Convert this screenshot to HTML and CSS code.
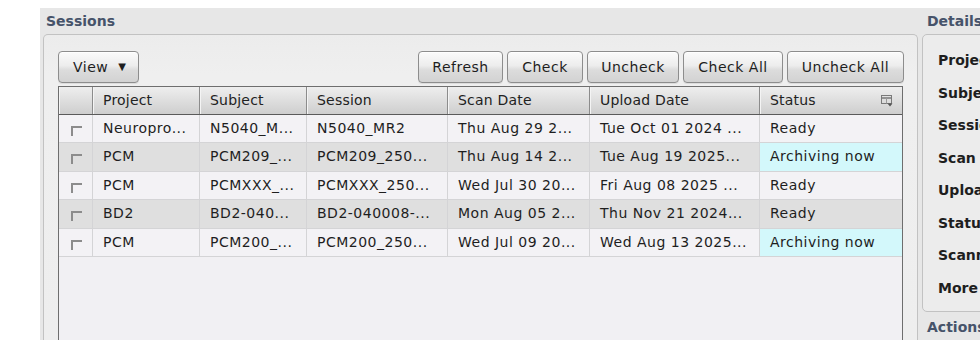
FILE: index.html
```html
<!DOCTYPE html>
<html>
<head>
<meta charset="utf-8">
<title>Sessions</title>
<link rel="stylesheet" href="styles.css">
</head>
<body>
<div class="app">
  <section class="sessions">
    <div class="section-title">Sessions</div>
    <div class="panel sessions-panel">
      <div class="toolbar">
        <button class="btn btn-view">View <span class="caret">&#9660;</span></button>
        <div class="toolbar-right">
          <button class="btn w-refresh">Refresh</button>
          <button class="btn w-check">Check</button>
          <button class="btn w-uncheck">Uncheck</button>
          <button class="btn w-checkall">Check All</button>
          <button class="btn w-uncheckall">Uncheck All</button>
        </div>
      </div>
      <div class="table">
        <div class="row thead">
          <div class="th"></div>
          <div class="th">Project</div>
          <div class="th">Subject</div>
          <div class="th">Session</div>
          <div class="th">Scan Date</div>
          <div class="th">Upload Date</div>
          <div class="th th-status">Status
            <svg class="col-icon" width="12" height="12" viewBox="0 0 12 12"><rect x="0.5" y="0.5" width="10" height="8" fill="none" stroke="#7a7a7a"/><line x1="0.5" y1="3" x2="10.5" y2="3" stroke="#7a7a7a" stroke-width="1.5"/><line x1="5.5" y1="3" x2="5.5" y2="8.5" stroke="#9a9a9a"/><path d="M6.5 8.5h5l-2.5 3z" fill="#555"/></svg>
          </div>
        </div>
        <div class="row tr odd">
          <div class="td td-check"><span class="cb"></span></div>
          <div class="td">Neuropro...</div>
          <div class="td">N5040_M...</div>
          <div class="td">N5040_MR2</div>
          <div class="td">Thu Aug 29 2...</div>
          <div class="td">Tue Oct 01 2024 ...</div>
          <div class="td">Ready</div>
        </div>
        <div class="row tr even">
          <div class="td td-check"><span class="cb"></span></div>
          <div class="td">PCM</div>
          <div class="td">PCM209_...</div>
          <div class="td">PCM209_250...</div>
          <div class="td">Thu Aug 14 2...</div>
          <div class="td">Tue Aug 19 2025...</div>
          <div class="td td-active">Archiving now</div>
        </div>
        <div class="row tr odd">
          <div class="td td-check"><span class="cb"></span></div>
          <div class="td">PCM</div>
          <div class="td">PCMXXX_...</div>
          <div class="td">PCMXXX_250...</div>
          <div class="td">Wed Jul 30 20...</div>
          <div class="td">Fri Aug 08 2025 ...</div>
          <div class="td">Ready</div>
        </div>
        <div class="row tr even">
          <div class="td td-check"><span class="cb"></span></div>
          <div class="td">BD2</div>
          <div class="td">BD2-040...</div>
          <div class="td">BD2-040008-...</div>
          <div class="td">Mon Aug 05 2...</div>
          <div class="td">Thu Nov 21 2024...</div>
          <div class="td">Ready</div>
        </div>
        <div class="row tr odd">
          <div class="td td-check"><span class="cb"></span></div>
          <div class="td">PCM</div>
          <div class="td">PCM200_...</div>
          <div class="td">PCM200_250...</div>
          <div class="td">Wed Jul 09 20...</div>
          <div class="td">Wed Aug 13 2025...</div>
          <div class="td td-active">Archiving now</div>
        </div>
      </div>
    </div>
  </section>
  <aside class="details">
    <div class="section-title details-title">Details</div>
    <div class="panel details-panel">
      <div class="dlabel">Project</div>
      <div class="dlabel">Subject</div>
      <div class="dlabel">Session</div>
      <div class="dlabel">Scan Date</div>
      <div class="dlabel">Upload Date</div>
      <div class="dlabel">Status</div>
      <div class="dlabel">Scanner</div>
      <div class="dlabel">More</div>
    </div>
    <div class="section-title details-title actions-title">Actions</div>
  </aside>
</div>
</body>
</html>
```

FILE: styles.css
```css
* { box-sizing: border-box; }

html, body {
  margin: 0;
  padding: 0;
}

body {
  width: 980px;
  height: 340px;
  overflow: hidden;
  background: #ffffff;
  font-family: "DejaVu Sans", "Liberation Sans", sans-serif;
  font-size: 14px;
  color: #222222;
}

.app {
  display: flex;
  gap: 4px;
  margin-left: 40px;
  margin-top: 8px;
  height: 332px;
  overflow: hidden;
  background: #e7e7e7;
}

.section-title {
  height: 26px;
  line-height: 26px;
  font-weight: bold;
  color: #46536a;
  padding-left: 3px;
  white-space: nowrap;
}

/* Sessions */
.sessions {
  flex: none;
  width: 878px;
  padding-left: 3px;
  display: flex;
  flex-direction: column;
}

.panel {
  border: 1px solid #c2c2c2;
  border-radius: 5px;
  background: #eeeeee;
}

.sessions-panel {
  flex: 1;
  display: flex;
  flex-direction: column;
  border-bottom: none;
  border-radius: 5px 5px 0 0;
  padding: 16px 13px 0 14px;
  background: linear-gradient(#ececec, #efefef 40px, #eeeeee);
}

.toolbar {
  display: flex;
  justify-content: space-between;
  height: 32px;
}

.toolbar-right {
  display: flex;
  gap: 4px;
}

.btn {
  height: 32px;
  padding: 0;
  font: inherit;
  letter-spacing: 0.5px;
  color: #1e1e1e;
  border: 1px solid #8d8d8d;
  border-radius: 4px;
  background: linear-gradient(#fbfbfb, #ededed 45%, #dcdcdc 60%, #d2d2d2);
  box-shadow: inset 0 1px 0 #ffffff, 0 1px 0 rgba(0,0,0,0.08);
  white-space: nowrap;
}

.btn-view { width: 81px; text-align: left; padding-left: 14px; }
.caret { font-size: 10px; vertical-align: 2px; margin-left: 5px; }
.w-refresh { width: 85px; }
.w-check { width: 76px; }
.w-uncheck { width: 92px; }
.w-checkall { width: 100px; }
.w-uncheckall { width: 117px; }

/* Table */
.table {
  flex: 1;
  margin-top: 3px;
  width: 845px;
  border: 1px solid #6e6e6e;
  border-bottom: none;
  background: #f1f0f3;
}

.row {
  display: grid;
  grid-template-columns: 34px 107px 107px 141px 142px 170px 142px;
}

.thead {
  height: 28px;
  border-bottom: 1px solid #5a5a5a;
}

.th {
  position: relative;
  height: 27px;
  line-height: 27px;
  padding-left: 10px;
  letter-spacing: 0.2px;
  background: linear-gradient(#eeeeee, #dedede 50%, #cecece);
  border-right: 1px solid #8c8c8c;
  box-shadow: inset 1px 0 0 #f4f4f4;
  white-space: nowrap;
}

.th:last-child { border-right: none; }

.col-icon {
  position: absolute;
  right: 9px;
  top: 8px;
}

.tr { height: 28.4px; }

.td {
  height: 28.4px;
  line-height: 27px;
  padding-left: 10px;
  letter-spacing: 0.5px;
  white-space: nowrap;
  overflow: hidden;
  color: #1e1e1e;
  border-right: 1px solid #d4d4d6;
  border-bottom: 1px solid #d4d4d6;
}

.td:last-child { border-right: none; }

.odd .td { background: #f3f2f5; }
.even .td { background: #dfdfdf; }
.tr .td-active { background: #d3f8fb; }

.td-check {
  padding-left: 12px;
}

.cb {
  display: inline-block;
  width: 11px;
  height: 10px;
  margin-top: 11px;
  vertical-align: top;
  border-top: 2px solid #8c8c8c;
  border-left: 2px solid #8c8c8c;
}

/* Details */
.details {
  flex: none;
  width: 220px;
  display: flex;
  flex-direction: column;
}

.details-title { padding-left: 5px; }

.details-panel {
  height: 279px;
  padding: 9px 0 0 15px;
  background: #ececec;
}

.dlabel {
  font-weight: bold;
  line-height: 32.5px;
  color: #1e1e1e;
  white-space: nowrap;
}

.actions-title { margin-top: 2px; }
```
